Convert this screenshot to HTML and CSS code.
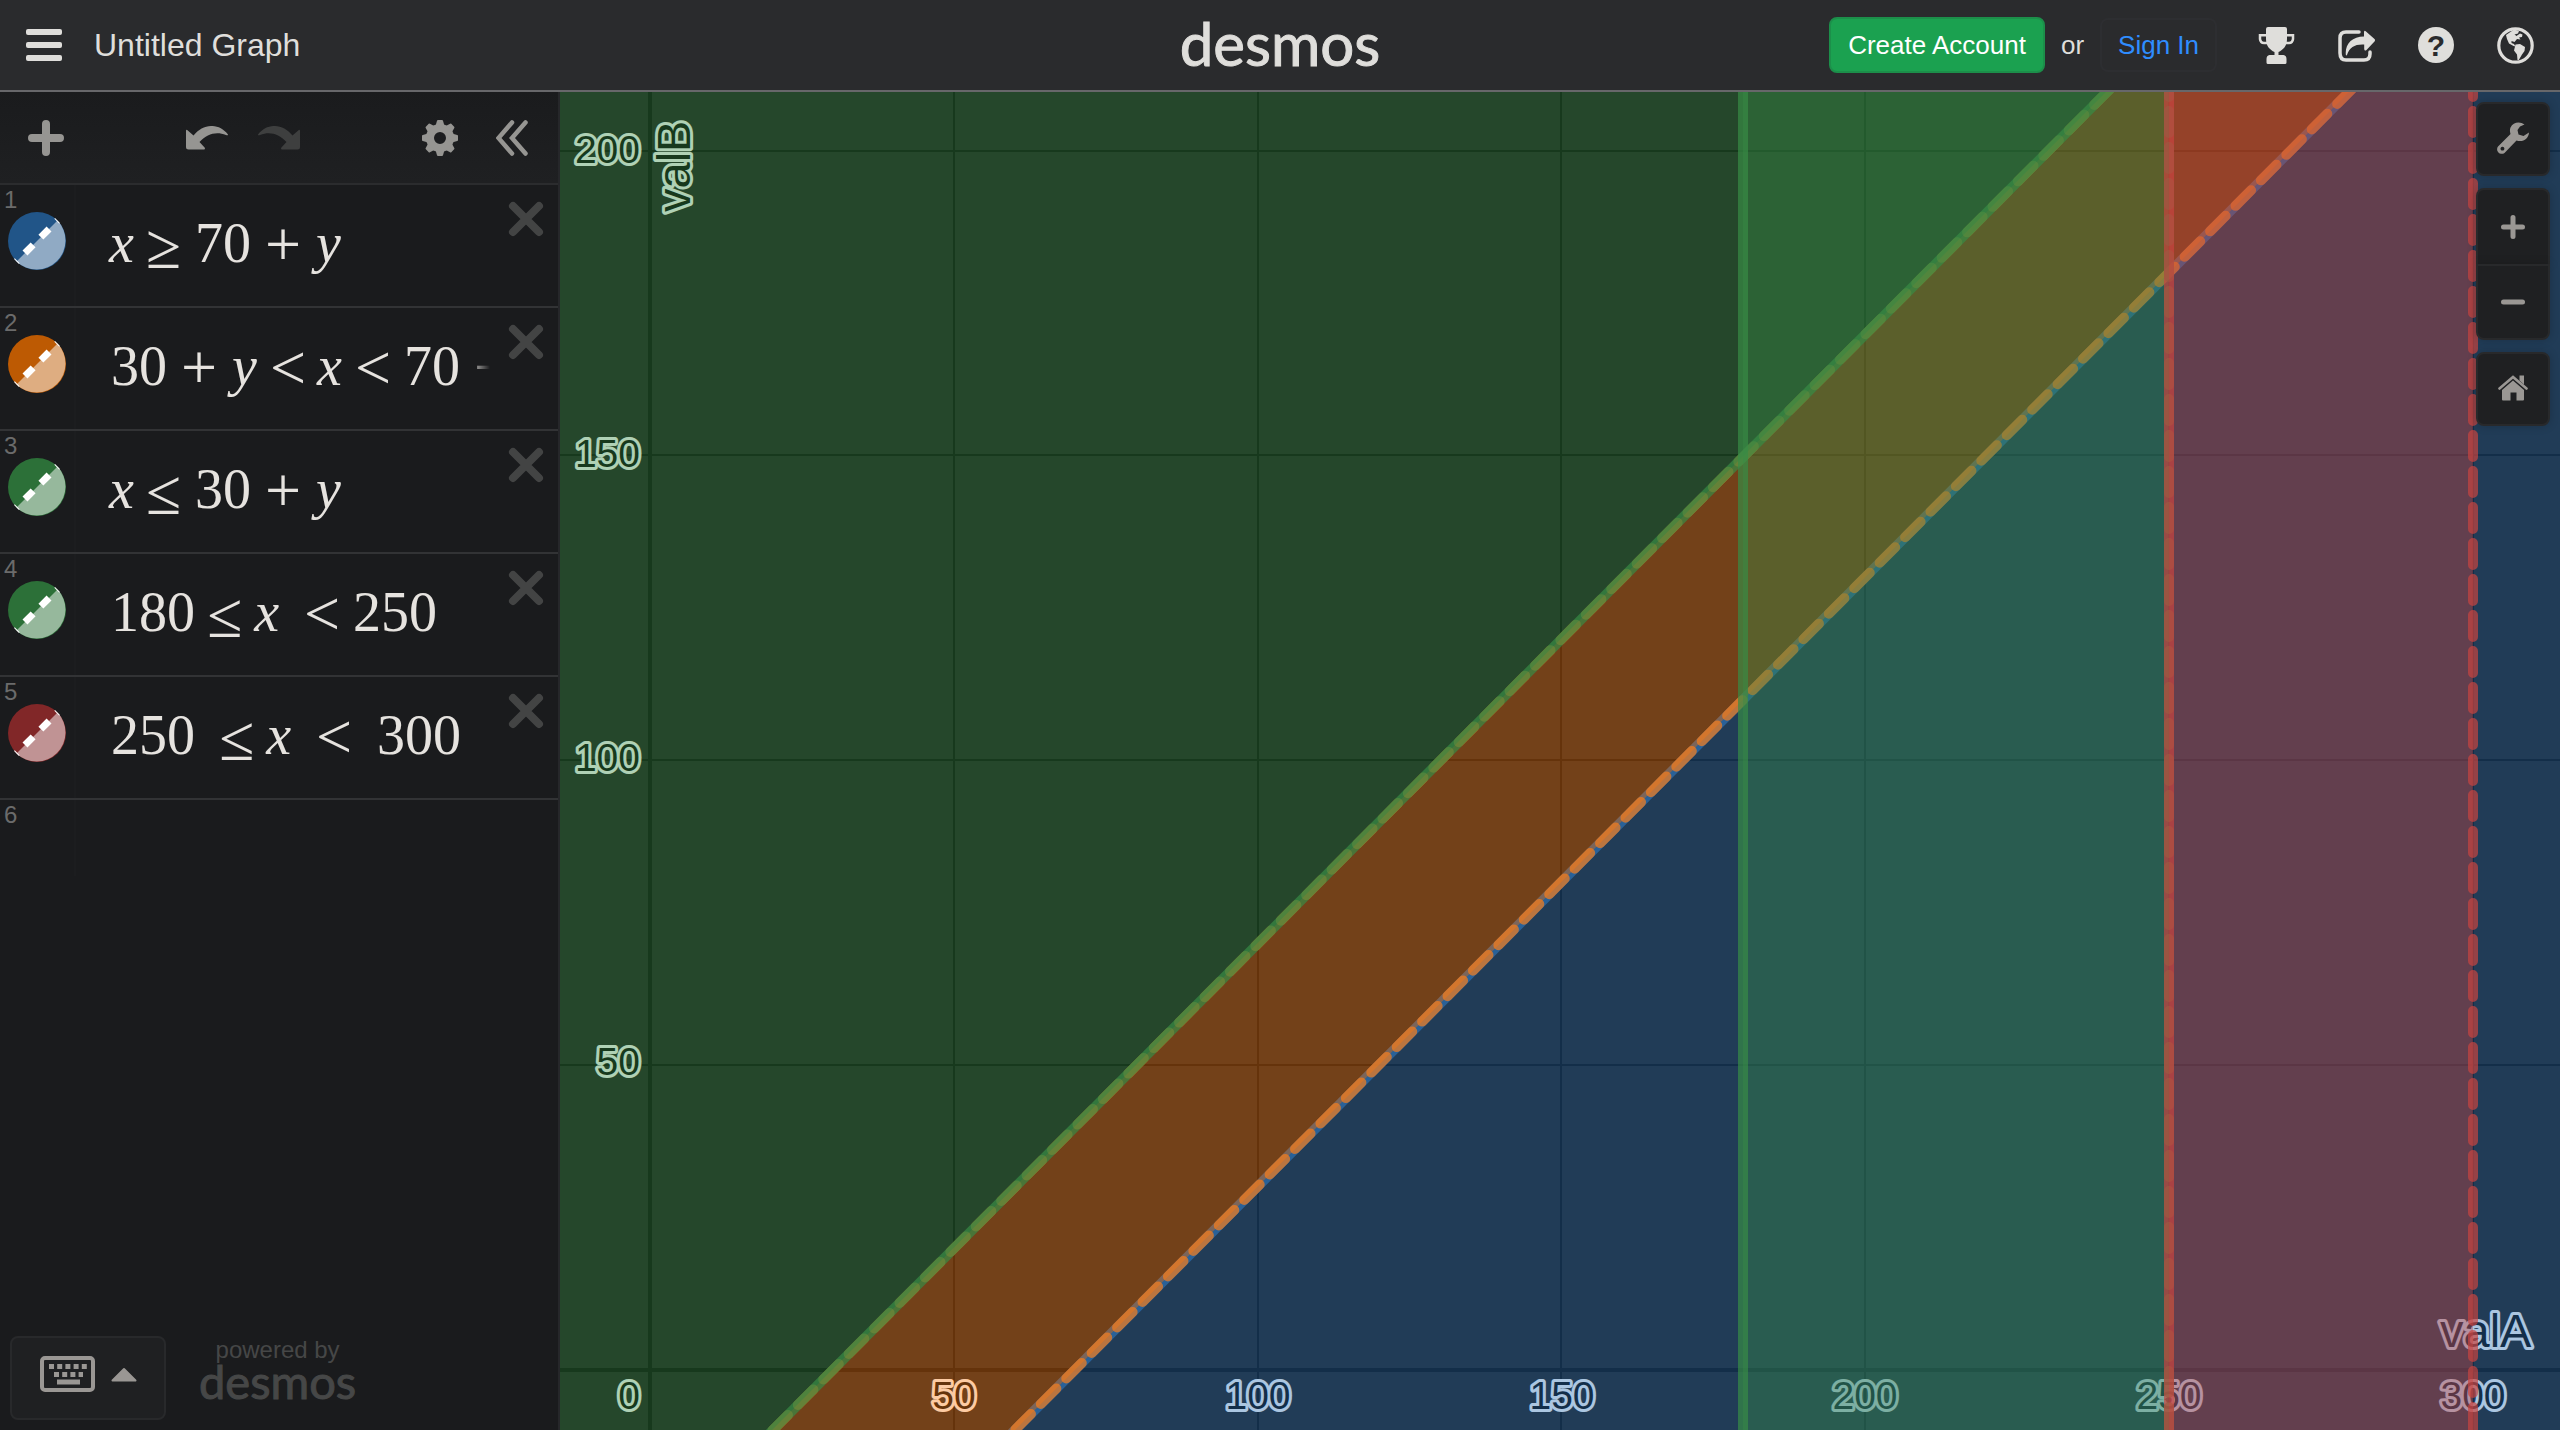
FILE: index.html
```html
<!DOCTYPE html>
<html lang="en">
<head>
<meta charset="utf-8">
<title>Untitled Graph</title>
<link rel="stylesheet" href="styles.css">
</head>
<body>
<svg class="defs" width="0" height="0" aria-hidden="true">
  <symbol id="i-x" viewBox="0 0 36 36"><path d="M5 5L31 31M31 5L5 31" fill="none" stroke="currentColor" stroke-width="8" stroke-linecap="round"/></symbol>
  <symbol id="i-undo" viewBox="0 0 42 24"><path d="M0 5q0-2 1.500-.8L7.500 9.500C17-2.500 33-3.500 42 8.500C42 9.500 41 9.500 40 9C30 5 21 8 13.500 16L19 22q0 1.500-1 1.500H2.500Q0 23.500 0 21z" fill="currentColor"/></symbol>
  <symbol id="i-plus" viewBox="0 0 36 36"><path d="M18 4V32M4 18H32" fill="none" stroke="currentColor" stroke-width="8" stroke-linecap="round"/></symbol>
  <symbol id="i-swatch" viewBox="0 0 58 58">
    <circle cx="29" cy="29" r="29" fill="currentColor"/>
    <path d="M8.500 49.500A29 29 0 0 0 49.500 8.500z" fill="#fff" fill-opacity=".5"/>
    <path d="M8.500 49.500L49.500 8.500" stroke="#fff" stroke-width="7" stroke-dasharray="11.500 11" stroke-dashoffset="10.500"/>
  </symbol>
</svg>

<header class="topbar">
  <div class="topbar-side">
    <button class="icon-btn bright" aria-label="Open menu">
      <svg width="36" height="33" viewBox="0 0 36 33"><g fill="currentColor"><rect width="36" height="6" rx="2"/><rect y="13" width="36" height="6" rx="2"/><rect y="26" width="36" height="6" rx="2"/></g></svg>
    </button>
    <h1 class="title">Untitled Graph</h1>
  </div>
  <a class="logo" href="#">desmos</a>
  <div class="topbar-side end">
    <button class="create">Create Account</button>
    <span class="or">or</span>
    <a class="signin" href="#">Sign In</a>
    <nav class="links bright">
      <button class="icon-btn" aria-label="Art"><svg width="37" height="37" viewBox="0 0 36 37"><path fill="currentColor" d="M7.500 2q0-2 2-2h17q2 0 2 2v10c0 7-4 11-8.500 13v3h5q3 .5 3 4v3.500q0 1.500-1.500 1.500h-17Q8 37 8 35.500V32q0-3.500 3-4h5v-3C11.500 23 7.500 19 7.500 12z"/><path fill="none" stroke="currentColor" stroke-width="2.500" d="M9 8.200H1.500V12q.5 4 4 4H10M27 8.200h7.500V12q-.5 4-4 4H26"/></svg></button>
      <button class="icon-btn" aria-label="Share"><svg width="37" height="37" viewBox="0 0 37 37"><path fill="none" stroke="currentColor" stroke-width="3.500" stroke-linecap="round" d="M21 5H8Q2 5 2 11V26Q2 33 8 33H26Q32 33 32 27V25"/><path fill="currentColor" d="M26 5q.3-2 2-.6L36.500 12q1 1.200 0 2.500L28.500 23q-2 1.500-2.300-1V17.500C17 17 11.500 20 9 28q-1 1-1.200-.5C7 17 14 9.500 26 9.500z"/></svg></button>
      <button class="icon-btn" aria-label="Help"><span class="help">?</span></button>
      <button class="icon-btn" aria-label="Language"><svg width="37" height="37" viewBox="0 0 37 37"><circle cx="18.500" cy="18.500" r="16.700" fill="none" stroke="currentColor" stroke-width="3.200"/><path fill="currentColor" d="M9 8L17 2.500L22 4L21 6.500L17.500 7.500L19.500 9L23 6.500L25.500 7.500L25 10L22 10.500L23.500 12.500L20 12L17.500 15L14.500 14L14.500 16L17 17L18.500 19.500L16.500 19L12 16.500L10 12zM18.500 17.500L23 17L28 20L27.500 24L25 27.500L21.500 33.500L20.500 33L20 27.500L17 23.500z"/></svg></button>
    </nav>
  </div>
</header>

<main class="workspace">
  <section class="sidebar" aria-label="Expressions">
    <div class="toolbar">
      <button class="icon-btn add" aria-label="Add item"><svg width="36" height="36"><use href="#i-plus"/></svg></button>
      <button class="icon-btn" aria-label="Undo"><svg width="42" height="24"><use href="#i-undo"/></svg></button>
      <button class="icon-btn dim redo" aria-label="Redo"><svg class="flip" width="42" height="24"><use href="#i-undo"/></svg></button>
      <button class="icon-btn settings" aria-label="Edit list"><svg width="36" height="36" viewBox="-18 -18 36 36"><circle r="10" fill="none" stroke="currentColor" stroke-width="8"/><g fill="currentColor"><path id="tooth" d="M-4.500-12L-3-17.200q.2-.8 1-.8h4q.8 0 1 .8L4.500-12z"/><use href="#tooth" transform="rotate(45)"/><use href="#tooth" transform="rotate(90)"/><use href="#tooth" transform="rotate(135)"/><use href="#tooth" transform="rotate(180)"/><use href="#tooth" transform="rotate(225)"/><use href="#tooth" transform="rotate(270)"/><use href="#tooth" transform="rotate(315)"/></g></svg></button>
      <button class="icon-btn" aria-label="Hide list"><svg width="32" height="36" viewBox="0 0 32 36"><path d="M16 2.500L2.500 18L16 33.500M29.500 2.500L16 18L29.500 33.500" fill="none" stroke="currentColor" stroke-width="4.500" stroke-linecap="round"/></svg></button>
    </div>

    <ol class="rows">
      <li class="row">
        <div class="gutter"><span class="num">1</span><button class="swatch blue" aria-label="Hide expression 1"><svg width="58" height="58"><use href="#i-swatch"/></svg></button></div>
        <div class="math"><i>x</i><span class="rel eq">≥</span><b>70</b><span class="op">+</span><i>y</i></div>
        <button class="icon-btn close" aria-label="Delete expression 1"><svg width="36" height="36"><use href="#i-x"/></svg></button>
      </li>
      <li class="row">
        <div class="gutter"><span class="num">2</span><button class="swatch orange" aria-label="Hide expression 2"><svg width="58" height="58"><use href="#i-swatch"/></svg></button></div>
        <div class="math"><b>30</b><span class="op">+</span><i>y</i><span class="rel">&lt;</span><i>x</i><span class="rel">&lt;</span><b>70</b><span class="op">+</span></div>
        <button class="icon-btn close" aria-label="Delete expression 2"><svg width="36" height="36"><use href="#i-x"/></svg></button>
      </li>
      <li class="row">
        <div class="gutter"><span class="num">3</span><button class="swatch green" aria-label="Hide expression 3"><svg width="58" height="58"><use href="#i-swatch"/></svg></button></div>
        <div class="math"><i>x</i><span class="rel eq">≤</span><b>30</b><span class="op">+</span><i>y</i></div>
        <button class="icon-btn close" aria-label="Delete expression 3"><svg width="36" height="36"><use href="#i-x"/></svg></button>
      </li>
      <li class="row">
        <div class="gutter"><span class="num">4</span><button class="swatch green" aria-label="Hide expression 4"><svg width="58" height="58"><use href="#i-swatch"/></svg></button></div>
        <div class="math"><b>180</b><span class="rel eq">≤</span><i>x</i><span class="sp"></span><span class="rel">&lt;</span><b>250</b></div>
        <button class="icon-btn close" aria-label="Delete expression 4"><svg width="36" height="36"><use href="#i-x"/></svg></button>
      </li>
      <li class="row">
        <div class="gutter"><span class="num">5</span><button class="swatch red" aria-label="Hide expression 5"><svg width="58" height="58"><use href="#i-swatch"/></svg></button></div>
        <div class="math"><b>250</b><span class="sp"></span><span class="rel eq">≤</span><i>x</i><span class="sp"></span><span class="rel">&lt;</span><span class="sp"></span><b>300</b></div>
        <button class="icon-btn close" aria-label="Delete expression 5"><svg width="36" height="36"><use href="#i-x"/></svg></button>
      </li>
      <li class="row blank"><div class="gutter"><span class="num">6</span></div></li>
    </ol>

    <footer class="side-foot">
      <button class="keypad" aria-label="Show keypad">
        <svg width="55" height="36" viewBox="0 0 55 36"><rect x="2" y="2" width="51" height="32" rx="3" fill="none" stroke="currentColor" stroke-width="4"/><path d="M9 10.500H47" stroke="currentColor" stroke-width="5" stroke-dasharray="5 3.200"/><path d="M14 18.500H43" stroke="currentColor" stroke-width="5" stroke-dasharray="5 3.200"/><path d="M17 26H40" stroke="currentColor" stroke-width="5"/></svg>
        <svg width="26" height="15" viewBox="0 0 26 15"><path d="M1.500 13.500L13 2L24.500 13.500z" fill="currentColor" stroke="currentColor" stroke-width="2" stroke-linejoin="round"/></svg>
      </button>
      <div class="powered"><span>powered by</span><span class="mark">desmos</span></div>
    </footer>
  </section>

  <section class="graph" aria-label="Graph paper">
    <svg class="plot" viewBox="560 92 2000 1338" preserveAspectRatio="xMinYMin slice" role="img" aria-label="Shaded regions of valA against valB">
      <g class="grid">
        <path d="M954 92V1430M1258 92V1430M1561 92V1430M1865 92V1430M2169 92V1430M2473 92V1430M560 151H2560M560 455H2560M560 760H2560M560 1065H2560"/>
        <path class="axis" d="M650 92V1430M560 1370H2560"/>
      </g>
      <g class="ticks">
        <text x="640" y="163" text-anchor="end">200</text>
        <text x="640" y="467" text-anchor="end">150</text>
        <text x="640" y="771" text-anchor="end">100</text>
        <text x="640" y="1075" text-anchor="end">50</text>
        <text x="640" y="1409" text-anchor="end">0</text>
        <text x="954" y="1409" text-anchor="middle">50</text>
        <text x="1258" y="1409" text-anchor="middle">100</text>
        <text x="1562" y="1409" text-anchor="middle">150</text>
        <text x="1865" y="1409" text-anchor="middle">200</text>
        <text x="2169" y="1409" text-anchor="middle">250</text>
        <text x="2473" y="1409" text-anchor="middle">300</text>
        <text class="axis-name" x="2440" y="1347">valA</text>
        <text class="axis-name" transform="translate(690 212) rotate(-90)">valB</text>
      </g>
      <path class="fill blue" d="M1015 1430L2356 85H2560V1430z"/>
      <path class="line blue" d="M990 1455L2366 75"/>
      <path class="fill orange" d="M772 1430L2113 85H2356L1015 1430z"/>
      <path class="line orange dash" d="M990 1455L2366 75"/>
      <path class="line orange dash" d="M747 1456L2123 76"/>
      <path class="fill green" d="M560 85H2113L772 1430H560z"/>
      <path class="line green" d="M747 1456L2123 76"/>
      <path class="fill green" d="M1743 85H2169V1430H1743z"/>
      <path class="line green" d="M1743 85V1440"/>
      <path class="line green dash" d="M2169 75V1440"/>
      <path class="fill red" d="M2169 85H2473V1430H2169z"/>
      <path class="line red" d="M2169 85V1440"/>
      <path class="line red dash" d="M2473 75V1440"/>
    </svg>
    <div class="tools">
      <button class="tool" aria-label="Graph settings"><svg width="32" height="32" viewBox="0 0 32 32"><path fill="currentColor" fill-rule="evenodd" d="M27.500 2.500C23-1 16 0 13.500 5.500C12.500 8 13 10 13.500 12L1 24.500C-2 28.500 3 34 7.500 31L19.500 18.500C26 20.500 31.500 17 32 10.500L26.500 14L21.500 12.500L20.500 8L23 4.500zM5.500 24.800a1.900 1.900 0 1 1-.1 0z"/></svg></button>
      <div class="zoom">
        <button class="tool" aria-label="Zoom in"><svg width="24" height="24" viewBox="0 0 24 24"><path d="M12 2.500V21.500M2.500 12H21.500" stroke="currentColor" stroke-width="5" stroke-linecap="round"/></svg></button>
        <button class="tool" aria-label="Zoom out"><svg width="24" height="24" viewBox="0 0 24 24"><path d="M2.500 12H21.500" stroke="currentColor" stroke-width="5" stroke-linecap="round"/></svg></button>
      </div>
      <button class="tool" aria-label="Default viewport"><svg width="30" height="26" viewBox="0 0 30 26"><path d="M1.500 13.500L15 2L28.500 13.500" fill="none" stroke="currentColor" stroke-width="2.600" stroke-linecap="round"/><path fill="currentColor" d="M21.500 .5h4.500v9l-4.500-4zM15 5.500L26 15v9.500q0 1-1 1h-6.500v-8h-6v8H5q-1 0-1-1V15z"/></svg></button>
    </div>
  </section>
</main>
</body>
</html>
```
FILE: styles.css
```css
* { box-sizing: border-box; }

body {
  margin: 0;
  min-height: 100vh;
  display: flex;
  flex-direction: column;
  background: #1a1b1d;
  color: #dfdedb;
  font-family: "Liberation Sans", Arial, sans-serif;
}

button {
  font: inherit;
  color: inherit;
  background: none;
  border: 0;
  padding: 0;
  cursor: pointer;
}

a { color: inherit; text-decoration: none; }
svg { display: block; }
.defs { position: absolute; }
.bright { color: #dfdedb; }
.icon-btn { flex: none; }

/* Top bar */
.topbar {
  display: grid;
  grid-template-columns: 1fr auto 1fr;
  align-items: center;
  height: 92px;
  padding: 0 26px;
  background: #2a2b2d;
  border-bottom: 2px solid #67676a;
}
.topbar-side { display: flex; align-items: center; }
.topbar-side.end { justify-content: flex-end; }
.title { margin: 0 0 0 32px; font-size: 32px; line-height: 40px; font-weight: 400; }
.logo { font: 400 60px/72px Lato, sans-serif; padding-bottom: 4px; -webkit-text-stroke: 1px currentColor; }
.create {
  height: 56px;
  padding: 0 17px;
  border: 2px solid #1c8f4a;
  border-radius: 8px;
  background: #1ba150;
  color: #fff;
  font-size: 26px;
}
.or { margin: 0 16px; font-size: 26px; }
.signin {
  padding: 0 16px;
  border: 2px solid #2d2e31;
  border-radius: 8px;
  color: #2f8dff;
  font-size: 26px;
  line-height: 50px;
}
.links { display: flex; gap: 43px; margin-left: 41px; }
.help {
  display: block;
  width: 36px;
  height: 36px;
  border-radius: 50%;
  background: #dfdedb;
  color: #2a2b2d;
  font-size: 30px;
  font-weight: 700;
  line-height: 37px;
}

/* Workspace */
.workspace { flex: 1; display: flex; }
.sidebar {
  flex: none;
  width: 560px;
  display: flex;
  flex-direction: column;
  border-right: 2px solid #26272a;
}
.toolbar {
  display: flex;
  align-items: center;
  height: 93px;
  padding: 0 30px 0 28px;
  border-bottom: 2px solid #2b2c2e;
  background: linear-gradient(#1a1b1d, #1f2022);
  color: #969592;
}
.add { margin-right: 122px; }
.redo { margin-left: 30px; }
.settings { margin-left: auto; margin-right: 38px; }
.dim { color: #3e3f3f; }
.flip { transform: scaleX(-1); }

.rows { flex: 1; margin: 0; padding: 0; list-style: none; }
.row {
  display: flex;
  align-items: flex-start;
  height: 123px;
  border-bottom: 2px solid #323335;
  padding-right: 14px;
}
.row.blank { height: 76px; border-bottom: 0; }
.gutter {
  flex: none;
  width: 76px;
  height: 100%;
  padding: 3px 0 0 8px;
  border-right: 2px solid #1c1d1f;
}
.num { display: block; margin-left: -4px; font-size: 24px; line-height: 24px; color: #6b6b6b; }
.swatch { display: block; border-radius: 50%; }
.swatch.blue { color: #215588; }
.swatch.orange { color: #bd5a03; }
.swatch.green { color: #2c7038; }
.swatch.red { color: #812728; }
.math {
  flex: 1;
  min-width: 0;
  height: 120px;
  margin-right: 18px;
  padding-left: 33px;
  overflow: hidden;
  white-space: nowrap;
  color: #e6e3df;
  font: 400 56px/116px "Liberation Serif", "Times New Roman", serif;
  -webkit-mask-image: linear-gradient(to right, #000 392px, transparent 414px);
  mask-image: linear-gradient(to right, #000 392px, transparent 414px);
}
.math b { font-weight: 400; margin-left: 2px; }
.math span { display: inline-block; position: relative; top: 4px; line-height: 60px; font-size: 64px; }
.math .rel { margin: 0 11px 0 13px; }
.math .op { margin: 0 15px 0 14px; }
.math .eq { top: 6px; margin: 0 12px; }
.math .sp { width: 12px; }
.close { margin-top: 16px; color: #434444; }

.side-foot { display: flex; align-items: flex-start; gap: 33px; padding: 0 10px 10px; }
.keypad {
  display: flex;
  align-items: center;
  justify-content: center;
  gap: 16px;
  width: 156px;
  height: 84px;
  padding-bottom: 8px;
  border: 2px solid #28292b;
  border-radius: 8px;
  background: #1f2022;
  color: #9a9794;
}
.powered { display: flex; flex-direction: column; align-items: center; color: #464747; font-size: 24px; line-height: 28px; }
.mark { font: 400 47px/34px Lato, sans-serif; -webkit-text-stroke: 1px currentColor; }

/* Graph */
.graph { flex: 1; position: relative; min-width: 0; background: #191919; }
.plot { position: absolute; width: 100%; height: 100%; }
.grid { stroke: #030303; stroke-width: 2; }
.axis { stroke-width: 4; }
.ticks {
  font-size: 39px;
  fill: #030303;
  stroke: #fff;
  stroke-width: 6;
  stroke-linejoin: round;
  paint-order: stroke;
}
.axis-name { font-size: 47px; }
.fill { fill-opacity: .4; }
.fill.blue { fill: #2d70b3; }
.fill.orange { fill: #fa7e19; }
.fill.green { fill: #388c46; }
.fill.red { fill: #c74440; }
.line { fill: none; stroke-width: 10; stroke-opacity: .7; }
.line.blue { stroke: #2d70b3; }
.line.orange { stroke: #fa7e19; }
.line.green { stroke: #388c46; }
.line.red { stroke: #c74440; }
.dash { stroke-dasharray: 22 14; stroke-linecap: round; }

.tools {
  position: absolute;
  top: 10px;
  right: 10px;
  display: flex;
  flex-direction: column;
  gap: 12px;
  color: #9a9794;
}
.tool {
  display: flex;
  align-items: center;
  justify-content: center;
  width: 74px;
  height: 74px;
  padding-bottom: 2px;
  border: 2px solid #28292b;
  border-radius: 8px;
  background: #1f2022;
  box-shadow: 0 0 10px rgba(0, 0, 0, .2);
}
.zoom { display: flex; flex-direction: column; }
.zoom .tool { height: 76px; padding-bottom: 0; }
.zoom .tool:first-child { border-radius: 8px 8px 0 0; border-bottom: 0; }
.zoom .tool:last-child { border-radius: 0 0 8px 8px; }
```
